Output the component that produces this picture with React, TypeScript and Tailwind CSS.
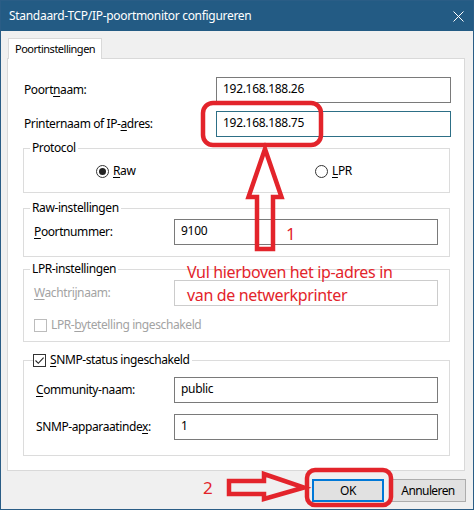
import React from "react";

const RED = "#e3242b";

function U({ children }: { children: React.ReactNode }) {
  return <span className="underline underline-offset-2 decoration-1">{children}</span>;
}

function Field({ value, disabled, w }: { value?: string; disabled?: boolean; w: string }) {
  return (
    <div
      className={`${w} h-[26px] flex items-center pl-[6px] pb-[3px] bg-white text-[12px] tracking-[-0.3px] text-black border ${
        disabled ? "border-[#cccccc]" : "border-[#7a7a7a]"
      }`}
    >
      {value}
    </div>
  );
}

function Radio({ checked }: { checked?: boolean }) {
  return (
    <span className="w-[13px] h-[13px] rounded-full border border-[#333] flex items-center justify-center shrink-0">
      {checked && <span className="w-[7px] h-[7px] rounded-full bg-[#222]" />}
    </span>
  );
}

function Check({ checked, disabled }: { checked?: boolean; disabled?: boolean }) {
  return (
    <span
      className={`w-[13px] h-[13px] border flex items-center justify-center shrink-0 bg-white ${
        disabled ? "border-[#bcbcbc]" : "border-[#333]"
      }`}
    >
      {checked && (
        <svg width="11" height="11" viewBox="0 0 11 11">
          <path d="M1.5 5.5 L4.3 8.3 L9.6 2.6" stroke="#222" strokeWidth="1.1" fill="none" />
        </svg>
      )}
    </span>
  );
}

export default function App() {
  return (
    <div className="relative w-[474px] h-[510px] border border-[#2a5d86] flex flex-col font-['Noto_Sans',sans-serif] text-[12px] tracking-[-0.4px] text-black leading-[16px]">
      {/* Title bar */}
      <div className="h-[30px] shrink-0 bg-[#235b84] flex items-center justify-between pl-[8px] pr-[9px] text-white text-[12px] tracking-[-0.3px]">
        <span>Standaard-TCP/IP-poortmonitor configureren</span>
        <svg width="11" height="11" viewBox="0 0 11 11">
          <path d="M0.5 0.5 L10.5 10.5 M10.5 0.5 L0.5 10.5" stroke="#fff" strokeWidth="1" />
        </svg>
      </div>

      {/* Body */}
      <div className="flex-1 bg-[#f0f0f0] pl-[6px] pt-[7px]">
        {/* Tab strip */}
        <div className="flex">
          <div className="relative z-10 -mb-px ml-[1px] h-[21px] px-[6px] flex items-center bg-white border border-b-0 border-[#d9d9d9] text-[11px] tracking-[-0.5px]">
            Poortinstellingen
          </div>
        </div>

        {/* Tab panel */}
        <div className="w-[458px] h-[413px] border border-[#d9d9d9] bg-white pl-[15px] pt-[18px]">
          <div className="flex items-center h-[26px]">
            <span className="w-[193px] pl-[1px]">
              Poort<U>n</U>aam:
            </span>
            <Field w="w-[235px]" value="192.168.188.26" />
          </div>
          <div className="flex items-center h-[26px] mt-[8px]">
            <span className="w-[193px] pl-[1px]">
              Printernaam of IP-<U>a</U>dres:
            </span>
            <div className="w-[235px] h-[26px] flex items-center pl-[6px] pb-[3px] text-[12px] tracking-[-0.3px] border border-[#2d6f86]">
              192.168.188.75
            </div>
          </div>

          {/* Protocol */}
          <fieldset className="w-[427px] mt-[3px] border border-[#dcdcdc] pb-[13px]">
            <legend className="ml-[6px] px-[2px]">Protocol</legend>
            <div className="flex items-center h-[16px] mt-[7px] pl-[72px]">
              <div className="w-[219px] flex items-center gap-[4px]">
                <Radio checked />
                <span>
                  <U>R</U>aw
                </span>
              </div>
              <div className="flex items-center gap-[4px]">
                <Radio />
                <span>
                  <U>L</U>PR
                </span>
              </div>
            </div>
          </fieldset>

          {/* Raw-instellingen */}
          <fieldset className="w-[427px] mt-[7px] border border-[#dcdcdc] pb-[11px]">
            <legend className="ml-[6px] px-[2px]">Raw-instellingen</legend>
            <div className="flex items-center mt-[3px] pl-[10px]">
              <span className="w-[140px]">
                <U>P</U>oortnummer:
              </span>
              <Field w="w-[264px]" value="9100" />
            </div>
          </fieldset>

          {/* LPR-instellingen */}
          <fieldset className="w-[427px] mt-[4px] border border-[#dcdcdc] pb-[8px]">
            <legend className="ml-[6px] px-[2px]">LPR-instellingen</legend>
            <div className="flex items-center mt-[3px] pl-[10px]">
              <span className="w-[140px] text-[#a3a3a3]">
                <U>W</U>achtrijnaam:
              </span>
              <Field w="w-[264px]" disabled />
            </div>
            <div className="flex items-center h-[16px] mt-[11px] pl-[10px] gap-[4px] text-[#a3a3a3]">
              <Check disabled />
              <span>
                LPR-<U>b</U>ytetelling ingeschakeld
              </span>
            </div>
          </fieldset>

          {/* SNMP */}
          <fieldset className="w-[427px] mt-[10px] border border-[#dcdcdc] pb-[15px]">
            <legend className="ml-[9px] pr-[2px] flex items-center gap-[4px]">
              <Check checked />
              <span>
                <U>S</U>NMP-status ingeschakeld
              </span>
            </legend>
            <div className="flex items-center mt-[9px] pl-[12px]">
              <span className="w-[138px]">
                <U>C</U>ommunity-naam:
              </span>
              <Field w="w-[264px]" value="public" />
            </div>
            <div className="flex items-center mt-[11px] pl-[12px]">
              <span className="w-[138px]">
                SNMP-apparaatinde<U>x</U>:
              </span>
              <Field w="w-[264px]" value="1" />
            </div>
          </fieldset>
        </div>

        {/* Buttons */}
        <div className="w-[459px] flex justify-end gap-[6px] mt-[8px]">
          <div className="w-[72px] h-[23px] flex items-center justify-center bg-[#e1e1e1] border-2 border-[#0078d7]">
            OK
          </div>
          <div className="w-[76px] h-[23px] flex items-center justify-center bg-[#e1e1e1] border border-[#adadad] tracking-[-0.6px]">
            Annuleren
          </div>
        </div>
      </div>

      {/* Annotations */}
      <svg className="absolute left-[-1px] top-[-1px] pointer-events-none" width="474" height="510" viewBox="0 0 474 510">
        <rect x="203" y="103" width="118" height="42" rx="10" fill="none" stroke={RED} strokeWidth="4.5" />
        <path
          d="M265 149 L248.5 197 L257 197 L257 249 L273 249 L273 197 L281.5 197 Z"
          fill="none"
          stroke={RED}
          strokeWidth="4.5"
          strokeLinejoin="miter"
        />
        <path
          d="M229 481 L264 481 L264 474 L304 487.5 L264 499 L264 494 L229 494 Z"
          fill="none"
          stroke={RED}
          strokeWidth="4.5"
        />
        <rect x="307" y="470" width="84" height="35" rx="8" fill="none" stroke={RED} strokeWidth="4.5" />
      </svg>
      <div className="absolute left-[285px] top-[221px] text-[17px] leading-[24px] text-[#e3242b]">1</div>
      <div className="absolute left-[202px] top-[475px] text-[17px] leading-[24px] text-[#e3242b]">2</div>
      <div className="absolute left-[186px] top-[260px] text-[16px] leading-[23px] tracking-[-0.35px] text-[#e3242b]">
        Vul hierboven het ip-adres in
        <br />
        van de netwerkprinter
      </div>
    </div>
  );
}
